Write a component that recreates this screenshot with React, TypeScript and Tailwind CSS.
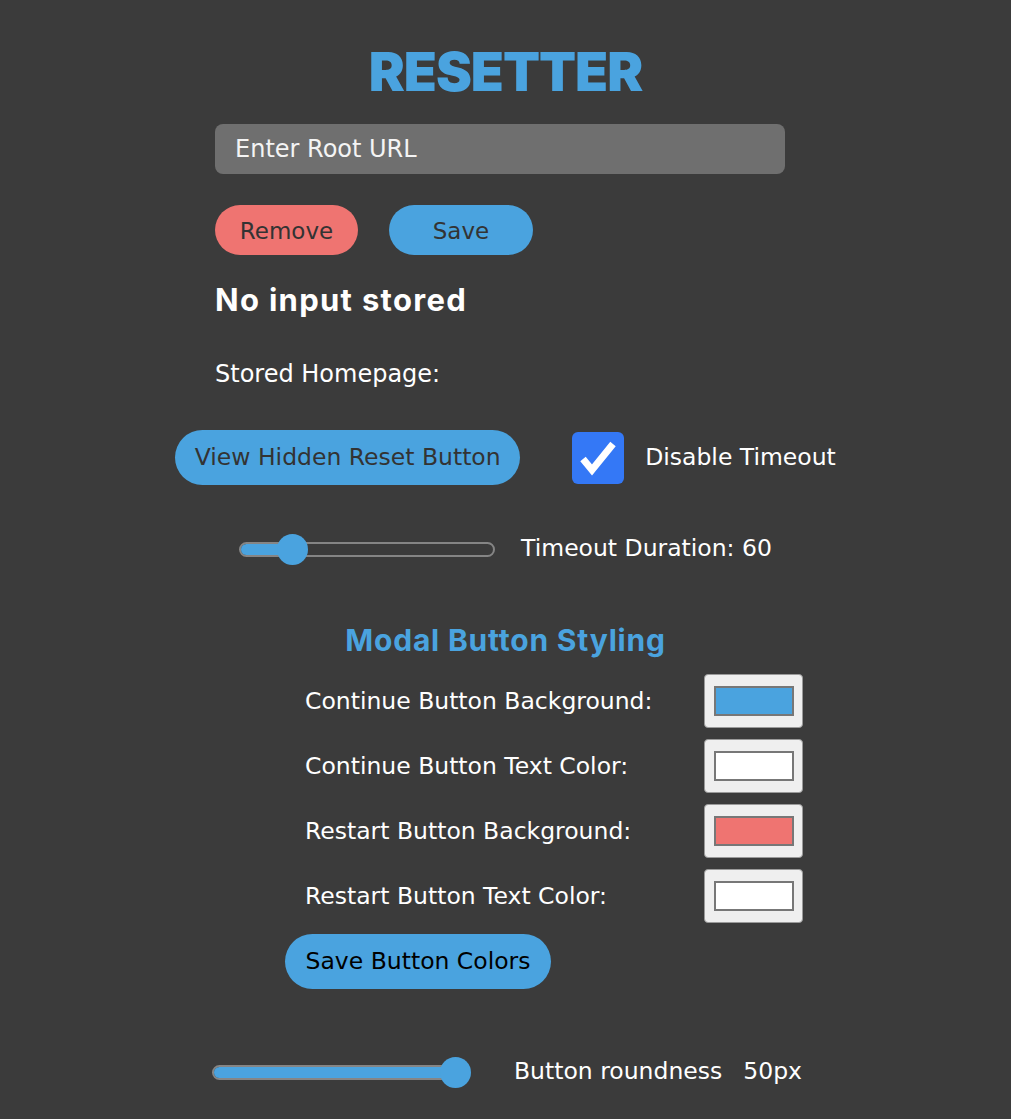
const body = { fontFamily: "'DejaVu Sans', 'Noto Sans', sans-serif" };
const heavy = { fontFamily: "Inter, 'Noto Sans', sans-serif" };

function Slider({ width, pos }: { width: number; pos: number }) {
  // pos = distance of the thumb centre from the left end
  return (
    <div className="relative h-[30px] shrink-0" style={{ width }}>
      <div className="absolute left-0 right-0 top-[8px] h-[15px] overflow-hidden rounded-full border-2 border-[#858585] bg-[#3b3b3b]">
        <div className="h-full bg-[#4aa3df]" style={{ width: pos }} />
      </div>
      <div
        className="absolute top-0 h-[31px] w-[31px] rounded-full bg-[#4aa3df]"
        style={{ left: pos - 15 }}
      />
    </div>
  );
}

function ColorRow({ label, color }: { label: string; color: string }) {
  return (
    <div className="grid h-[54px] grid-cols-[399px_99px] items-center pl-[90px]">
      <span className="whitespace-nowrap text-[23.5px] text-white">{label}</span>
      <div className="flex h-[54px] w-[99px] items-center justify-center rounded-[4px] border border-[#9a9a9a] bg-[#efefef]">
        <div className="h-[30px] w-[80px] border-2 border-[#777]" style={{ backgroundColor: color }} />
      </div>
    </div>
  );
}

export default function App() {
  return (
    <div className="min-h-[1119px] bg-[#3b3b3b] pb-10" style={body}>
      <div className="flex flex-col items-center pt-[40px]">
        <h1 className="text-[54px] font-black leading-[64px] tracking-[-1px] text-[#4aa3df]" style={heavy}>
          RESETTER
        </h1>
      </div>

      <div className="mx-auto w-[581px]">
        <div className="mt-[20px] flex h-[50px] w-[570px] items-center rounded-[8px] bg-[#6f6f6f] px-[20px] text-[24px] text-[#f4f4f4]">
          Enter Root URL
        </div>

        <div className="mt-[31px] flex gap-[31px]">
          <button className="h-[50px] w-[143px] rounded-full bg-[#ef7471] pt-[3px] text-[23px] text-[#333]">Remove</button>
          <button className="h-[50px] w-[144px] rounded-full bg-[#4aa3df] pt-[3px] text-[23px] text-[#333]">Save</button>
        </div>

        <div
          className="mt-[26px] text-[31px] font-bold leading-[38px] tracking-[1.3px] text-white"
          style={heavy}
        >
          No input stored
        </div>

        <div className="mt-[40px] text-[24px] leading-[30px] text-white">Stored Homepage:</div>
      </div>

      <div className="mt-[41px] flex items-center justify-center">
        <button className="h-[55px] w-[345px] rounded-full bg-[#4aa3df] text-[23.5px] text-[#333]">
          View Hidden Reset Button
        </button>
        <div className="ml-[52px] flex h-[52px] w-[52px] items-center justify-center rounded-[6px] bg-[#3478f6]">
          <svg viewBox="0 0 52 52" className="h-[52px] w-[52px]">
            <polyline
              points="11,27 20,38 41,12"
              fill="none"
              stroke="white"
              strokeWidth="7"
              strokeLinejoin="miter"
              strokeLinecap="butt"
            />
          </svg>
        </div>
        <span className="ml-[21px] text-[23.5px] text-white">Disable Timeout</span>
      </div>

      <div className="mt-[46px] flex items-center justify-center">
        <Slider width={256} pos={53} />
        <span className="ml-[26px] whitespace-nowrap text-[23.5px] text-white">Timeout Duration: 60</span>
      </div>

      <div
        className="mt-[54px] text-center text-[30px] font-bold leading-[40px] tracking-[0.8px] text-[#4aa3df]"
        style={heavy}
      >
        Modal Button Styling
      </div>

      <div className="mx-auto mt-[14px] flex w-[581px] flex-col gap-[11px]">
        <ColorRow label="Continue Button Background:" color="#4aa3df" />
        <ColorRow label="Continue Button Text Color:" color="#ffffff" />
        <ColorRow label="Restart Button Background:" color="#ef7471" />
        <ColorRow label="Restart Button Text Color:" color="#ffffff" />
        <div className="pl-[70px]">
          <button className="h-[55px] w-[266px] rounded-full bg-[#4aa3df] text-[23.5px] text-black">Save Button Colors</button>
        </div>
      </div>

      <div className="mt-[65px] flex items-center pl-[212px]">
        <Slider width={257} pos={243} />
        <span className="ml-[45px] whitespace-nowrap text-[23.5px] text-white">Button roundness</span>
        <span className="ml-[21px] whitespace-nowrap text-[23.5px] text-white">50px</span>
      </div>
    </div>
  );
}
